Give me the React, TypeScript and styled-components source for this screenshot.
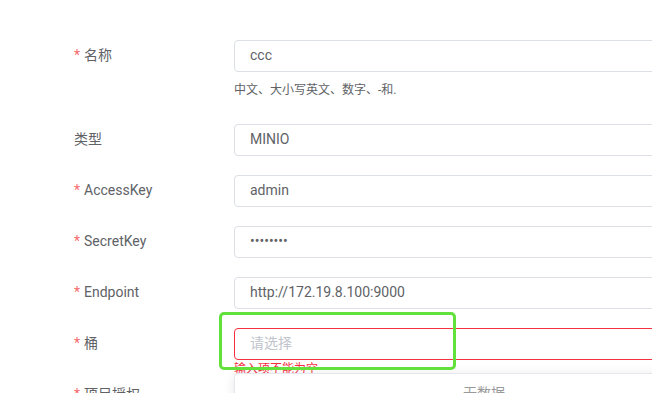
import React from 'react'
import styled, { createGlobalStyle } from 'styled-components'

interface IField {
  label: string
  required?: boolean
  value?: string
  placeholder?: string
  hint?: string
  error?: string
  dropdown?: boolean
  highlight?: boolean
}

const fields: IField[] = [
  { label: '名称', required: true, value: 'ccc', hint: '中文、大小写英文、数字、-和.' },
  { label: '类型', value: 'MINIO' },
  { label: 'AccessKey', required: true, value: 'admin' },
  { label: 'SecretKey', required: true, value: '••••••••' },
  { label: 'Endpoint', required: true, value: 'http://172.19.8.100:9000' },
  { label: '桶', required: true, placeholder: '请选择', error: '输入项不能为空', dropdown: true, highlight: true },
  { label: '项目授权', required: true, value: '' },
]

export default function App() {
  return (
    <>
      <GlobalStyle />
      <Form>
        {fields.map((f) => (
          <FormItem key={f.label}>
            <Label $required={f.required}>{f.label}</Label>
            <Content>
              <Input $error={!!f.error}>
                {f.value ? <span>{f.value}</span> : <Placeholder>{f.placeholder}</Placeholder>}
              </Input>
              {f.hint && <Hint>{f.hint}</Hint>}
              {f.error && <ErrorText>{f.error}</ErrorText>}
              {f.dropdown && <Dropdown>无数据</Dropdown>}
              {f.highlight && <Highlight />}
            </Content>
          </FormItem>
        ))}
      </Form>
    </>
  )
}

const GlobalStyle = createGlobalStyle`
  html, body {
    margin: 0;
    padding: 0;
    background: #fff;
    overflow: hidden;
  }
  body {
    font-family: Roboto, "Noto Sans CJK SC", sans-serif;
    color: #606266;
  }
`

const Form = styled.div`
  padding: 40px 0 0 74px;
  width: 760px;
`

const FormItem = styled.div`
  display: flex;
  align-items: flex-start;
  margin-bottom: 19px;
`

const Label = styled.div<{ $required?: boolean }>`
  width: 160px;
  flex: none;
  font-size: 14px;
  line-height: 31px;
  color: #606266;

  &::before {
    content: ${(p) => (p.$required ? "'*'" : "''")};
    color: #f56c6c;
    margin-right: ${(p) => (p.$required ? '4px' : '0')};
  }
`

const Content = styled.div`
  position: relative;
  width: 500px;
  flex: none;
`

const Input = styled.div<{ $error?: boolean }>`
  box-sizing: border-box;
  height: 32px;
  line-height: 29px;
  padding: 0 15px;
  font-size: 14px;
  color: #606266;
  border: 1px solid ${(p) => (p.$error ? '#f5313f' : '#dcdfe6')};
  border-radius: 4px;
  background: #fff;
`

const Placeholder = styled.span`
  color: #c0c4cc;
`

const Hint = styled.div`
  font-size: 12px;
  line-height: 12px;
  padding: 12px 0 9px;
  color: #606266;
`

const ErrorText = styled.div`
  position: absolute;
  top: 100%;
  left: 0;
  padding-top: 3px;
  font-size: 12px;
  line-height: 12px;
  color: #f5313f;
`

const Dropdown = styled.div`
  position: absolute;
  top: calc(100% + 13px);
  left: 0;
  right: 0;
  box-sizing: border-box;
  padding: 10px 0;
  border: 1px solid #e4e7ed;
  border-radius: 4px;
  background: #fff;
  box-shadow: 0 2px 12px rgba(0, 0, 0, 0.1);
  font-size: 14px;
  line-height: 18px;
  text-align: center;
  color: #999;
  z-index: 2;
`

const Highlight = styled.div`
  position: absolute;
  left: -15px;
  top: -16px;
  width: 237px;
  height: 58px;
  box-sizing: border-box;
  border: 3px solid #62e03c;
  border-radius: 5px;
  z-index: 3;
`
